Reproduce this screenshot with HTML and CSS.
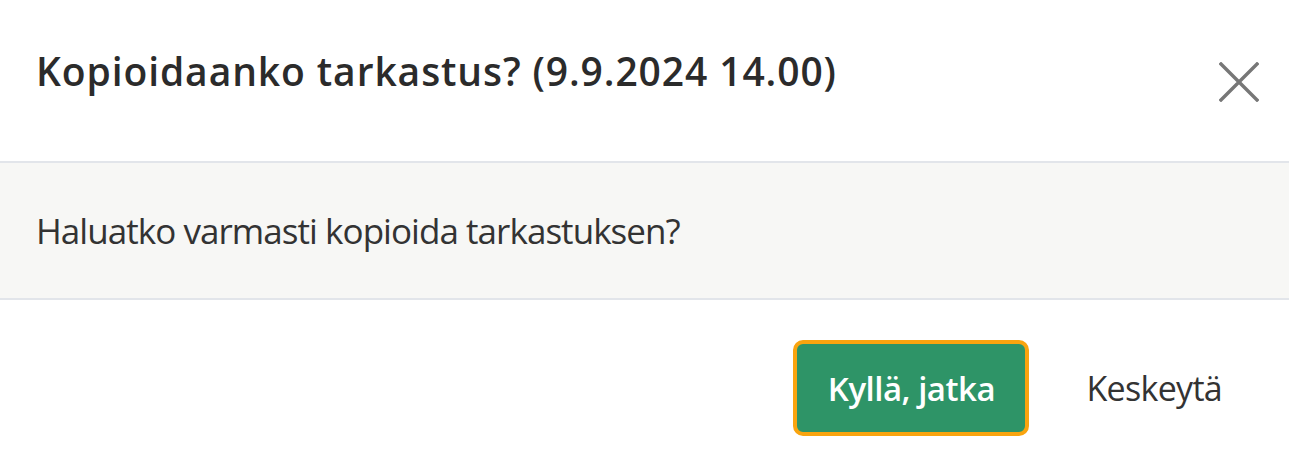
FILE: index.html
```html
<!DOCTYPE html>
<html lang="fi">
<head>
<meta charset="utf-8">
<link rel="stylesheet" href="styles.css">
</head>
<body>
<div class="modal">
  <div class="modal-header">
    <h2 class="modal-title">Kopioidaanko tarkastus? (9.9.2024 14.00)</h2>
    <button class="close-btn" aria-label="Sulje">
      <svg width="40" height="40" viewBox="0 0 40 40"><path d="M2 2 L38 38 M38 2 L2 38" stroke="#777" stroke-width="3.4" stroke-linecap="square" fill="none"/></svg>
    </button>
  </div>
  <div class="modal-body">
    <p class="modal-text">Haluatko varmasti kopioida tarkastuksen?</p>
  </div>
  <div class="modal-footer">
    <button class="btn-primary">Kyllä, jatka</button>
    <button class="btn-link">Keskeytä</button>
  </div>
</div>
</body>
</html>
```
FILE: styles.css
```css
html, body {
  margin: 0;
  padding: 0;
  background: #fff;
}
.modal {
  width: 1289px;
  height: 471px;
  font-family: "Open Sans", "Noto Sans", sans-serif;
  color: #2b2b2b;
  display: flex;
  flex-direction: column;
}
.modal-header {
  display: flex;
  align-items: center;
  justify-content: space-between;
  padding: 0 30px 0 36px;
  border-bottom: 2px solid #e2e5ea;
  box-sizing: border-box;
  height: 163px;
}
.modal-title {
  margin: 0 0 20px 0;
  font-size: 39px;
  font-weight: 600;
  color: #2b2b2b;
  letter-spacing: 0.9px;
}
.close-btn {
  background: none;
  border: none;
  padding: 0;
  margin-top: 2px;
  width: 40px;
  height: 40px;
  display: flex;
}
.modal-body {
  background: #f7f7f5;
  height: 137px;
  box-sizing: border-box;
  border-bottom: 2px solid #e2e5ea;
  display: flex;
  align-items: center;
  padding: 0 36px;
}
.modal-text {
  margin: 0;
  font-size: 35px;
  color: #333;
  letter-spacing: -0.95px;
}
.modal-footer {
  flex: 1;
  display: flex;
  justify-content: flex-end;
  align-items: flex-start;
  padding: 40px 67px 0 0;
  gap: 57px;
}
.btn-primary {
  width: 236px;
  height: 96px;
  background: #2e9467;
  border: 4px solid #f9a40f;
  border-radius: 10px;
  color: #fff;
  font-family: inherit;
  font-size: 33px;
  font-weight: 600;
  letter-spacing: -0.5px;
  padding: 0;
}
.btn-link {
  background: none;
  border: none;
  padding: 0;
  height: 96px;
  font-family: inherit;
  font-size: 34px;
  color: #333;
  letter-spacing: -0.7px;
}
```
